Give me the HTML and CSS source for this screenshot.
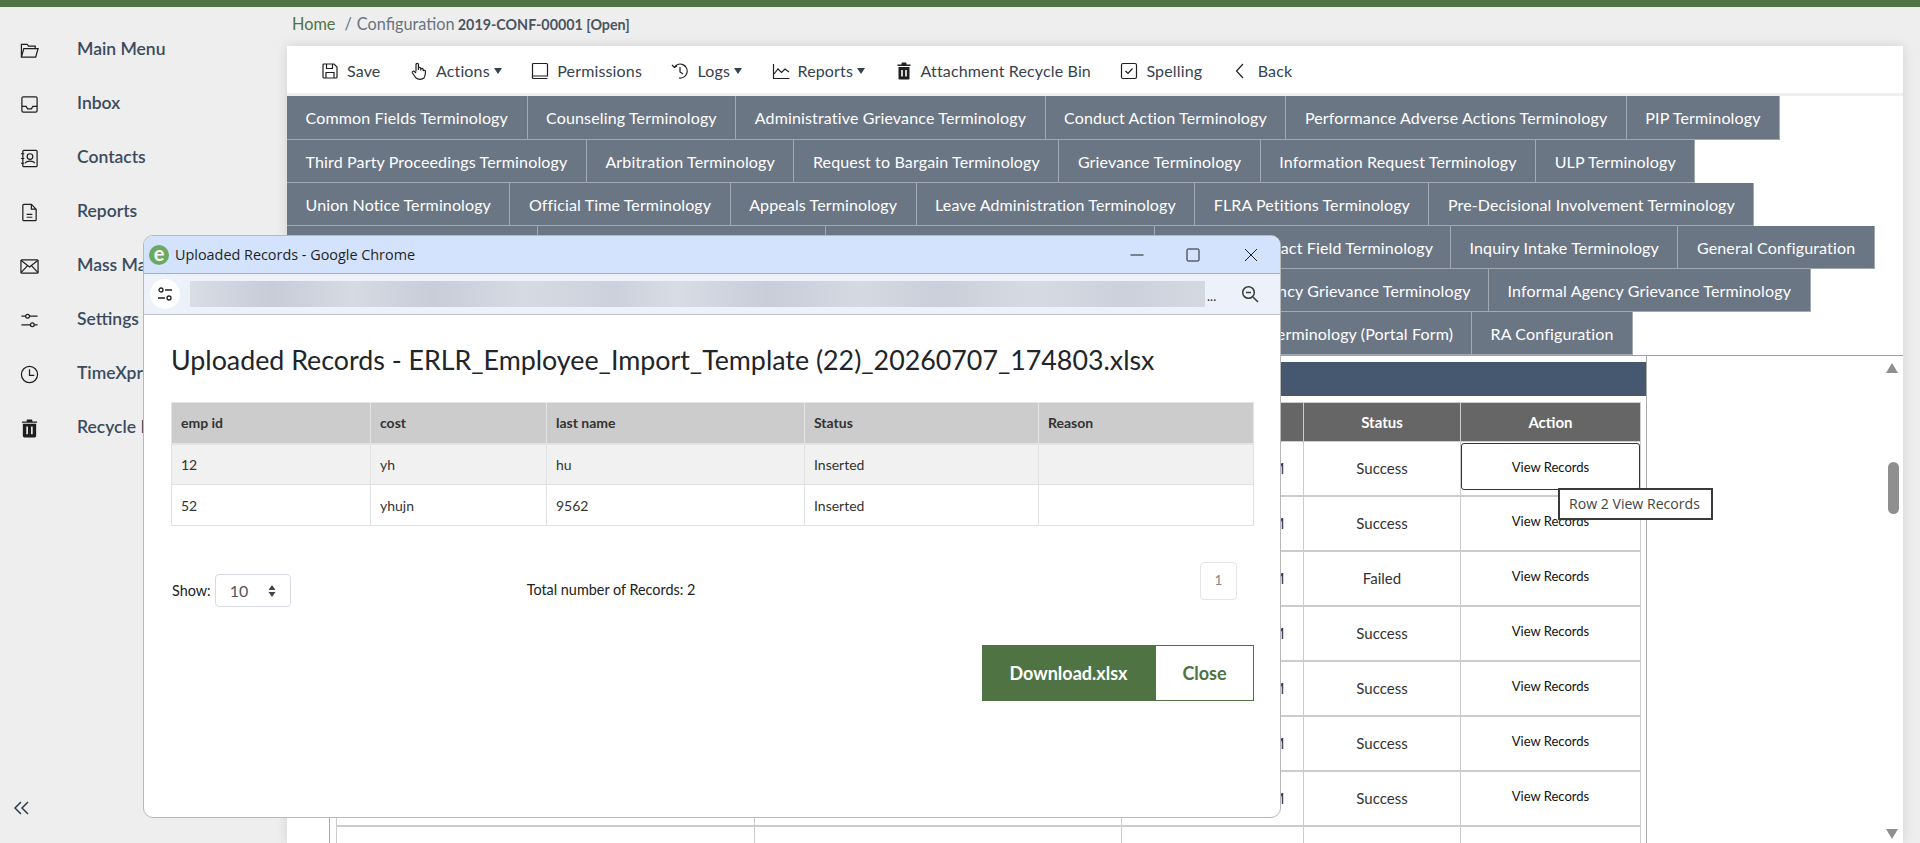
FILE: index.html
```html
<!DOCTYPE html>
<html lang="en">
<head>
  <meta charset="UTF-8" />
  <title>Configuration 2019-CONF-00001</title>
  <link rel="stylesheet" href="styles.css">
</head>
<body>
  <div class="topbar"></div>
  <div class="layout">
    <!-- side menu -->
    <nav class="sidebar">
      <a class="side-item"><svg class="side-icon" viewBox="0 0 20 20"><path d="M1.500 17V3.500h6l1.500 2h7v2.500M1.500 17h15l2.500-9H4z"/></svg>Main Menu</a>
      <a class="side-item"><svg class="side-icon" viewBox="0 0 20 20"><rect x="2" y="2" width="16" height="16" rx="1.500"/><path d="M2 12h4.500l1.500 2.500h4l1.500-2.500H18"/></svg>Inbox</a>
      <a class="side-item"><svg class="side-icon" viewBox="0 0 20 20"><rect x="3" y="1.500" width="15" height="17" rx="1"/><circle cx="10.500" cy="8" r="3"/><path d="M5.500 15c1-3 9-3 10 0M1 5h3.500M1 10h3.500M1 15h3.500"/></svg>Contacts</a>
      <a class="side-item"><svg class="side-icon" viewBox="0 0 20 20"><path d="M3 2.500a1 1 0 0 1 1-1h8l5 5v11a1 1 0 0 1-1 1H4a1 1 0 0 1-1-1zM12 1.500v5h5M7 12h6M7 15h6"/></svg>Reports</a>
      <a class="side-item"><svg class="side-icon" viewBox="0 0 20 20"><rect x="1" y="3" width="18" height="14" rx="1"/><path d="M1 3.500l9 7 9-7M1 16.500l7-7.500M19 16.500L12 9" /></svg>Mass Mail</a>
      <a class="side-item"><svg class="side-icon" viewBox="0 0 20 20"><circle cx="8" cy="5.500" r="2"/><circle cx="13" cy="14.500" r="2"/><path d="M1.500 5.500H6M10 5.500h8.500M1.500 14.500H11M15 14.500h3.500"/></svg>Settings</a>
      <a class="side-item"><svg class="side-icon" viewBox="0 0 20 20"><circle cx="10" cy="10" r="8.500"/><path d="M10 4.500V11h5"/></svg>TimeXpress</a>
      <a class="side-item"><svg class="side-icon" viewBox="0 0 20 20"><path class="solid" d="M3 5h14v13a1.500 1.500 0 0 1-1.500 1.500h-11A1.500 1.500 0 0 1 3 18zM2 2.500h5V1.500a1 1 0 0 1 1-1h4a1 1 0 0 1 1 1v1h5V4H2z"/><path class="cut" d="M7.500 8v8M12.500 8v8"/></svg>Recycle Bin</a>
      <svg class="collapse" viewBox="0 0 18 16"><path d="M8 2L2 8l6 6M15 2L9 8l6 6"/></svg>
    </nav>

    <main class="main">
      <div class="crumbs"><a class="crumb-home">Home</a><span class="crumb-sep">/</span>Configuration <b>2019-CONF-00001 [Open]</b></div>

      <div class="card">
        <div class="toolbar">
          <span class="tool"><svg class="tool-icon" viewBox="0 0 18 18"><path d="M2 3a1 1 0 0 1 1-1h10l3 3v10a1 1 0 0 1-1 1H3a1 1 0 0 1-1-1zM5.500 2v4.500h6V2M5 16v-5.500h8V16"/></svg>Save</span>
          <span class="tool"><svg class="tool-icon" viewBox="0 0 18 18"><path d="M6 9.500V2.500a1.200 1.200 0 0 1 2.400 0V8M8.400 8V6.500a1.200 1.200 0 0 1 2.400 0V8.500M10.800 8.500V7.500a1.200 1.200 0 0 1 2.400 0v1.500M13.200 9a1.200 1.200 0 0 1 2.300.500c0 3-.500 5-1.500 6.500-2 1.700-6 1.700-8 0L2.500 11c-.8-1.200.8-2.600 2-1.500L6 11"/></svg>Actions<i class="caret"></i></span>
          <span class="tool"><svg class="tool-icon" viewBox="0 0 18 18"><path d="M1.500 14V2.500a1 1 0 0 1 1-1h13a1 1 0 0 1 1 1V14zM1.500 14c-.5 2.500.5 2.500 1 2.500h14"/></svg>Permissions</span>
          <span class="tool"><svg class="tool-icon" viewBox="0 0 18 18"><path d="M3.500 5A7 7 0 1 1 8 16M1 3l2.500 2.500L6 4M9 5v5l3 2"/></svg>Logs<i class="caret"></i></span>
          <span class="tool"><svg class="tool-icon" viewBox="0 0 18 18"><path d="M1.500 2v14.500h16M2 12l4-5 3.500 3.500L13 7l4 3"/></svg>Reports<i class="caret"></i></span>
          <span class="tool"><svg class="tool-icon" viewBox="0 0 18 18"><path class="solid" d="M3.500 5h11v11.500a1 1 0 0 1-1 1h-9a1 1 0 0 1-1-1zM2.500 2.500h4V1.500a1 1 0 0 1 1-1h3a1 1 0 0 1 1 1v1h4V4h-13z"/><path class="cut" d="M7 8v6.500M11 8v6.500"/></svg>Attachment Recycle Bin</span>
          <span class="tool"><svg class="tool-icon" viewBox="0 0 18 18"><rect x="1.500" y="1.500" width="15" height="15" rx="1.500"/><path d="M5.500 9l2.500 2.500 4.500-5"/></svg>Spelling</span>
          <span class="tool"><svg class="tool-icon" viewBox="0 0 18 18"><path d="M11 2L4.500 9l6.500 7"/></svg>Back</span>
        </div>

        <div class="tabs">
          <div class="tab-row">
            <a class="tab">Common Fields Terminology</a>
            <a class="tab">Counseling Terminology</a>
            <a class="tab">Administrative Grievance Terminology</a>
            <a class="tab">Conduct Action Terminology</a>
            <a class="tab">Performance Adverse Actions Terminology</a>
            <a class="tab">PIP Terminology</a>
          </div>
          <div class="tab-row">
            <a class="tab">Third Party Proceedings Terminology</a>
            <a class="tab">Arbitration Terminology</a>
            <a class="tab">Request to Bargain Terminology</a>
            <a class="tab">Grievance Terminology</a>
            <a class="tab">Information Request Terminology</a>
            <a class="tab">ULP Terminology</a>
          </div>
          <div class="tab-row tight">
            <a class="tab">Union Notice Terminology</a>
            <a class="tab">Official Time Terminology</a>
            <a class="tab">Appeals Terminology</a>
            <a class="tab">Leave Administration Terminology</a>
            <a class="tab">FLRA Petitions Terminology</a>
            <a class="tab">Pre-Decisional Involvement Terminology</a>
          </div>
          <div class="tab-row">
            <a class="tab w-251">Telework Terminology</a>
            <a class="tab w-288">Reasonable Accommodation Terminology</a>
            <a class="tab w-329">Disability Accommodation Terminology</a>
            <a class="tab w-296">Employee Contact Field Terminology</a>
            <a class="tab">Inquiry Intake Terminology</a>
            <a class="tab">General Configuration</a>
          </div>
          <div class="tab-row">
            <a class="tab w-440">Compliance Terminology</a>
            <a class="tab w-453">Settlement Agreement Terminology</a>
            <a class="tab w-309">Formal Agency Grievance Terminology</a>
            <a class="tab">Informal Agency Grievance Terminology</a>
          </div>
          <div class="tab-row">
            <a class="tab w-759">Reasonable Accommodation Terminology</a>
            <a class="tab w-426">Reasonable Accommodation Terminology (Portal Form)</a>
            <a class="tab">RA Configuration</a>
          </div>
        </div>

        <div class="panel">
          <div class="records">
            <div class="band"></div>
            <table class="log-table">
              <colgroup><col class="c1"><col class="c2"><col class="c3"><col class="c4"><col class="c5"></colgroup>
              <thead>
                <tr><th>File Name</th><th>Uploaded By</th><th>Uploaded Date</th><th>Status</th><th>Action</th></tr>
              </thead>
              <tbody>
                <tr class="first"><td>Template.xlsx</td><td>Admin</td><td>07/07/2026 5:48 PM</td><td>Success</td><td class="act"><button class="view focused">View Records</button></td></tr>
                <tr><td>Template.xlsx</td><td>Admin</td><td>07/07/2026 5:40 PM</td><td>Success</td><td class="act"><button class="view">View Records</button></td></tr>
                <tr><td>Template.xlsx</td><td>Admin</td><td>07/07/2026 5:32 PM</td><td>Failed</td><td class="act"><button class="view">View Records</button></td></tr>
                <tr><td>Template.xlsx</td><td>Admin</td><td>07/07/2026 5:21 PM</td><td>Success</td><td class="act"><button class="view">View Records</button></td></tr>
                <tr><td>Template.xlsx</td><td>Admin</td><td>07/07/2026 5:14 PM</td><td>Success</td><td class="act"><button class="view">View Records</button></td></tr>
                <tr><td>Template.xlsx</td><td>Admin</td><td>07/07/2026 5:02 PM</td><td>Success</td><td class="act"><button class="view">View Records</button></td></tr>
                <tr><td>Template.xlsx</td><td>Admin</td><td>07/07/2026 4:55 PM</td><td>Success</td><td class="act"><button class="view">View Records</button></td></tr>
                <tr><td></td><td></td><td></td><td></td><td></td></tr>
              </tbody>
            </table>
          </div>
          <div class="scrollbar">
            <i class="arrow-up"></i>
            <i class="thumb"></i>
            <i class="arrow-down"></i>
          </div>
        </div>
      </div>
    </main>
  </div>

  <div class="tooltip">Row 2 View Records</div>

  <!-- popup window -->
  <section class="popup">
    <div class="popup-title">
      <span class="favicon">e</span>
      <span class="popup-name">Uploaded Records - Google Chrome</span>
      <svg class="win-btn" viewBox="0 0 14 14"><path d="M0.500 7h13"/></svg>
      <svg class="win-btn" viewBox="0 0 14 14"><rect x="1" y="1" width="12" height="12" rx="1"/></svg>
      <svg class="win-btn" viewBox="0 0 14 14"><path d="M1 1l12 12M13 1L1 13"/></svg>
    </div>
    <div class="popup-address">
      <span class="site-info"><svg viewBox="0 0 16 16"><circle cx="4" cy="4" r="2"/><circle cx="12" cy="12" r="2"/><path d="M8 4h7M1 12h7"/></svg></span>
      <span class="url-blur"></span>
      <span class="url-more">...</span>
      <svg class="zoom-out" viewBox="0 0 18 18"><circle cx="7.500" cy="7.500" r="5.800"/><path d="M5 7.500h5M12 12l5 5"/></svg>
    </div>
    <div class="popup-body">
      <h1 class="popup-heading">Uploaded Records - ERLR_Employee_Import_Template (22)_20260707_174803.xlsx</h1>
      <table class="up-table">
        <colgroup><col class="u1"><col class="u2"><col class="u3"><col class="u4"><col class="u5"></colgroup>
        <thead>
          <tr><th>emp id</th><th>cost</th><th>last name</th><th>Status</th><th>Reason</th></tr>
        </thead>
        <tbody>
          <tr class="odd"><td>12</td><td>yh</td><td>hu</td><td>Inserted</td><td></td></tr>
          <tr><td>52</td><td>yhujn</td><td>9562</td><td>Inserted</td><td></td></tr>
        </tbody>
      </table>
      <div class="pager">
        <div class="show">
          <span>Show:</span>
          <span class="select">10<svg class="select-arrows" viewBox="0 0 8 14"><path d="M4 1l3.500 5h-7zM4 13L.5 8h7z"/></svg></span>
        </div>
        <div class="total">Total number of Records: 2</div>
        <div class="page-num">1</div>
      </div>
      <div class="popup-actions">
        <button class="btn-download">Download.xlsx</button>
        <button class="btn-close">Close</button>
      </div>
    </div>
  </section>
</body>
</html>
```

FILE: styles.css
```css
* {
  box-sizing: border-box;
}

body {
  margin: 0;
  height: 843px;
  overflow: hidden;
  background-color: #eeeeee;
  font-family: "Lato", "Liberation Sans", sans-serif;
  color: #333;
  position: relative;
}

.topbar {
  height: 7px;
  background-color: #4f7343;
}

.layout {
  display: flex;
  height: 836px;
}

/* side menu */
.sidebar {
  width: 287px;
  flex-shrink: 0;
  display: flex;
  flex-direction: column;
  padding-top: 14px;
}

.side-item {
  display: flex;
  align-items: center;
  height: 54px;
  padding-left: 20px;
  font-size: 17.500px;
  font-weight: 600;
  color: #3b4b5e;
}

.side-icon {
  width: 19px;
  height: 19px;
  margin-right: 38px;
  margin-top: 4px;
  fill: none;
  stroke: #1f1f1f;
  stroke-width: 1.3;
}

.side-icon .solid,
.tool-icon .solid {
  fill: #1f1f1f;
  stroke: none;
}

.side-icon .cut,
.tool-icon .cut {
  stroke: #fff;
  stroke-width: 1.6;
}

.collapse {
  width: 18px;
  height: 16px;
  margin: auto 0 27px 13px;
  fill: none;
  stroke: #2c3a4a;
  stroke-width: 1.5;
}

/* main area */
.main {
  width: 1616px;
  display: flex;
  flex-direction: column;
}

.crumbs {
  height: 39px;
  padding: 7px 0 0 5px;
  font-size: 16.300px;
  color: #6a7480;
}

.crumbs b {
  margin-left: -1px;
  font-size: 14.300px;
  color: #4a5562;
}

.crumb-home {
  color: #4f7343;
}

.crumb-sep {
  margin: 0 5px 0 9px;
}

.card {
  flex: 1;
  display: flex;
  flex-direction: column;
  min-height: 0;
  background-color: #fff;
  box-shadow: 0 0 12px rgba(0, 0, 0, 0.12);
}

.toolbar {
  display: flex;
  align-items: center;
  gap: 29.500px;
  height: 47px;
  padding: 2px 0 0 34px;
  margin-bottom: 3px;
  box-shadow: 0 3px 0 #efefef;
}

.tool {
  display: flex;
  align-items: center;
  font-size: 16px;
  letter-spacing: 0.150px;
  color: #36424f;
}

.tool-icon {
  width: 18px;
  height: 18px;
  margin-right: 8px;
  fill: none;
  stroke: #1f1f1f;
  stroke-width: 1.2;
}

.caret {
  width: 0;
  height: 0;
  margin-left: 4px;
  border-left: 4px solid transparent;
  border-right: 4px solid transparent;
  border-top: 6px solid #36424f;
}

/* terminology tabs */
.tabs {
  border-bottom: 1px solid #9aa0a8;
}

.tab-row {
  display: flex;
  height: 43px;
}

.tab-row:first-child {
  height: 44px;
}

.tab {
  display: flex;
  align-items: center;
  justify-content: center;
  flex-shrink: 0;
  padding: 0 18.500px;
  background-color: #6b7685;
  border-right: 1px solid #a2a9b2;
  border-bottom: 1px solid #a2a9b2;
  font-size: 16px;
  letter-spacing: 0.150px;
  color: #fff;
  white-space: nowrap;
}

.tight .tab {
  letter-spacing: 0.120px;
}

.w-251 { width: 251px; }
.w-288 { width: 288px; }
.w-329 { width: 329px; }
.w-296 { width: 296px; }
.w-440 { width: 440px; }
.w-453 { width: 453px; }
.w-309 { width: 309px; }
.w-759 { width: 759px; }
.w-426 { width: 426px; }

/* records panel */
.panel {
  flex: 1;
  display: flex;
  min-height: 0;
  padding-left: 42px;
}

.records {
  width: 1318px;
  border-left: 1px solid #aaa;
  border-right: 1px solid #aaa;
  padding: 6px 5px 0 6px;
  overflow: hidden;
}

.band {
  height: 34px;
  margin: 0 -5px 6px -6px;
  background-color: #46586f;
}

.log-table {
  width: 1304px;
  table-layout: fixed;
  border-collapse: collapse;
  font-size: 15px;
}

.c1 { width: 418px; }
.c2 { width: 367px; }
.c3 { width: 182px; }
.c4 { width: 157px; }
.c5 { width: 180px; }

.log-table th {
  height: 39px;
  padding: 0 0 1px;
  background-color: #666;
  border: 1px solid #ccc;
  color: #fff;
  font-size: 15px;
}

.log-table td {
  height: 55px;
  padding: 0;
  border-left: 1px solid #ccc;
  border-right: 1px solid #ccc;
  border-bottom: 2px solid #ccc;
  text-align: center;
  color: #333;
}

.log-table .first td {
  height: 54px;
}

.log-table .act {
  vertical-align: top;
  padding: 1px 0 0;
}

.view {
  display: block;
  width: 100%;
  height: 46px;
  background: #fff;
  border: 0;
  border-radius: 3px;
  font-family: inherit;
  font-size: 13px;
  color: #111;
}

.view.focused {
  height: 47px;
  border: 1px solid #333;
}

.scrollbar {
  position: relative;
  flex: 1;
  background-color: #fff;
}

.arrow-up,
.arrow-down {
  position: absolute;
  right: 5px;
  width: 0;
  height: 0;
  border-left: 6px solid transparent;
  border-right: 6px solid transparent;
}

.arrow-up {
  top: 7px;
  border-bottom: 10px solid #8f8f8f;
}

.arrow-down {
  bottom: 4px;
  border-top: 10px solid #8f8f8f;
}

.thumb {
  position: absolute;
  top: 106px;
  right: 4px;
  width: 11px;
  height: 52px;
  border-radius: 6px;
  background-color: #8f8f8f;
}

.tooltip {
  position: absolute;
  left: 1558px;
  top: 488px;
  width: 155px;
  height: 32px;
  padding-left: 9px;
  line-height: 27px;
  background-color: #fff;
  border: 2px solid #3a3a3a;
  font-family: "Open Sans", sans-serif;
  font-size: 14.100px;
  color: #444;
  white-space: nowrap;
}

/* popup window */
.popup {
  position: absolute;
  left: 143px;
  top: 235px;
  width: 1138px;
  height: 583px;
  display: flex;
  flex-direction: column;
  background-color: #fff;
  border: 1px solid #b8b8b8;
  border-radius: 10px;
  overflow: hidden;
}

.popup-title {
  display: flex;
  align-items: center;
  height: 38px;
  flex-shrink: 0;
  padding-left: 5px;
  background-color: #d3e3fd;
  border-bottom: 1px solid #a9b0ba;
}

.favicon {
  width: 20px;
  height: 20px;
  border-radius: 50%;
  margin-right: 6px;
  background-color: #6aa95f;
  color: #fff;
  font-size: 20px;
  font-weight: 700;
  line-height: 16px;
  text-align: center;
}

.popup-name {
  flex: 1;
  font-family: "Open Sans", sans-serif;
  font-size: 14.400px;
  color: #1f1f1f;
}

.win-btn {
  width: 14px;
  height: 14px;
  margin-right: 44px;
  fill: none;
  stroke: #1f1f1f;
  stroke-width: 1;
}

.win-btn:nth-of-type(1) {
  margin-right: 42px;
}

.win-btn:last-child {
  margin-right: 22px;
}

.popup-address {
  display: flex;
  align-items: center;
  height: 41px;
  flex-shrink: 0;
  padding-left: 6px;
  background-color: #edf2fa;
  border-bottom: 1px solid #bfc2c7;
}

.site-info {
  width: 30px;
  height: 30px;
  display: flex;
  align-items: center;
  justify-content: center;
  margin-right: 10px;
  border-radius: 50%;
  background-color: #fff;
}

.site-info svg {
  width: 16px;
  height: 16px;
  fill: none;
  stroke: #1f1f1f;
  stroke-width: 1.300;
}

.url-blur {
  width: 1015px;
  height: 26px;
  background: linear-gradient(90deg, #d9dde6 0, #c8ccd7 8%, #d6dae3 16%, #c9cdd8 24%, #d6dae3 33%, #cdd1db 42%, #d8dce5 48%, #c9cdd8 57%, #d5d9e2 66%, #cacfd9 74%, #d6dae3 83%, #cdd1db 92%, #d4d8e1 100%);
}

.url-more {
  width: 36px;
  padding: 4px 0 0 2px;
  font-size: 13px;
  color: #333;
}

.zoom-out {
  width: 18px;
  height: 18px;
  fill: none;
  stroke: #3a3a3a;
  stroke-width: 1.500;
}

.popup-body {
  padding: 28px 26px 0 27px;
}

.popup-heading {
  margin: 0 0 25px;
  font-size: 26.800px;
  font-weight: 400;
  line-height: 34px;
  color: #212529;
  white-space: nowrap;
}

.up-table {
  width: 1082px;
  table-layout: fixed;
  border-collapse: collapse;
  font-size: 14px;
}

.u1 { width: 199px; }
.u2 { width: 176px; }
.u3 { width: 258px; }
.u4 { width: 234px; }
.u5 { width: 215px; }

.up-table th {
  height: 41px;
  padding: 0 9px;
  background-color: #cccccc;
  border: 1px solid #e4e4e4;
  border-bottom: 2px solid #e4e4e4;
  text-align: left;
  color: #333;
}

.up-table td {
  height: 41px;
  padding: 0 9px;
  border: 1px solid #e2e2e2;
  color: #333;
}

.up-table .odd td {
  background-color: #f1f1f1;
}

.pager {
  display: flex;
  align-items: flex-start;
  margin-top: 36px;
  font-size: 14.400px;
  color: #222;
}

.show {
  display: flex;
  align-items: center;
  gap: 4px;
  margin: 12px 0 0 1px;
}

.select {
  display: flex;
  align-items: center;
  justify-content: space-between;
  width: 76px;
  height: 33px;
  padding: 0 14px 0 14px;
  border: 1px solid #d8dce2;
  border-radius: 4px;
  font-size: 16px;
  color: #555;
}

.select-arrows {
  width: 8px;
  height: 14px;
  fill: #444;
}

.total {
  margin: 19px 0 0 236px;
}

.page-num {
  width: 37px;
  height: 38px;
  margin: 0 17px 0 auto;
  border: 1px solid #e2e5e9;
  border-radius: 4px;
  font-size: 13.500px;
  line-height: 34px;
  text-align: center;
  color: #888;
}

.popup-actions {
  display: flex;
  justify-content: flex-end;
  margin-top: 38px;
}

.popup-actions button {
  height: 56px;
  font-family: inherit;
  font-size: 18px;
  font-weight: 700;
  border: 1px solid #4f7343;
}

.btn-download {
  width: 173px;
  background-color: #4f7343;
  color: #fff;
}

.btn-close {
  width: 99px;
  background-color: #fff;
  color: #4f7343;
}
```
